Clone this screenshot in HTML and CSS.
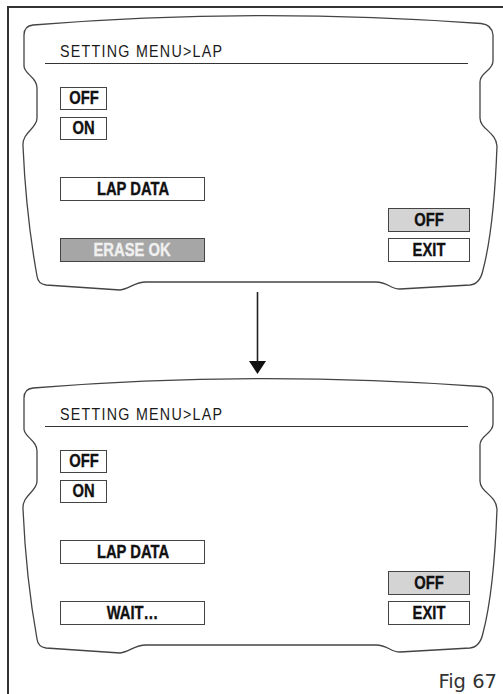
FILE: index.html
```html
<!DOCTYPE html>
<html lang="en">
<head>
    <meta charset="UTF-8">
    <meta name="viewport" content="width=device-width, initial-scale=1.0">
    <title>Setting menu - LAP</title>
    <link rel="stylesheet" href="styles.css">
</head>

<body>
    <div class="frame">

        <!-- Tela 1 -->
        <div class="screen">
            <svg class="outline" width="494" height="279" viewBox="9 13 494 279">
                <path d="M 33 25 Q 254 7 481 23.5 Q 492 24.5 493 35 L 493 61 C 493 71 480 72 480 82 L 480 118 C 480 129 496 132 497 146 Q 494 228 483 270 Q 480 284 470 285 L 400 289 C 390 289 388 282 376 282 L 146 282 C 134 282 130 289 120 290 L 46 285 Q 38 284 37 276 Q 26 215 23 146 C 22 132 37 129 37 118 L 37 88 C 37 77 24 74 24 66 L 24 35 Q 24 26 33 25 Z"/>
            </svg>
            <div class="screen-body">
                <div class="title"><span class="narrow">SETTING MENU&gt;LAP</span></div>
                <div class="toggles">
                    <div class="key small"><span class="narrow">OFF</span></div>
                    <div class="key small"><span class="narrow">ON</span></div>
                </div>
                <div class="key wide lap"><span class="narrow">LAP DATA</span></div>
                <div class="bottom-row">
                    <div class="key wide dark"><span class="narrow">ERASE OK</span></div>
                    <div class="side">
                        <div class="key side-key grey"><span class="narrow">OFF</span></div>
                        <div class="key side-key"><span class="narrow">EXIT</span></div>
                    </div>
                </div>
            </div>
        </div>

        <!-- Seta -->
        <div class="arrow">
            <svg width="494" height="84" viewBox="9 292 494 84">
                <line x1="257.5" y1="291" x2="257.5" y2="363" stroke="#222" stroke-width="1.6"/>
                <polygon points="249,361 266,361 257.5,374" fill="#111"/>
            </svg>
        </div>

        <!-- Tela 2 -->
        <div class="screen">
            <svg class="outline" width="494" height="279" viewBox="9 13 494 279">
                <path d="M 33 25 Q 254 7 481 23.5 Q 492 24.5 493 35 L 493 61 C 493 71 480 72 480 82 L 480 118 C 480 129 496 132 497 146 Q 494 228 483 270 Q 480 284 470 285 L 400 289 C 390 289 388 282 376 282 L 146 282 C 134 282 130 289 120 290 L 46 285 Q 38 284 37 276 Q 26 215 23 146 C 22 132 37 129 37 118 L 37 88 C 37 77 24 74 24 66 L 24 35 Q 24 26 33 25 Z"/>
            </svg>
            <div class="screen-body">
                <div class="title"><span class="narrow">SETTING MENU&gt;LAP</span></div>
                <div class="toggles">
                    <div class="key small"><span class="narrow">OFF</span></div>
                    <div class="key small"><span class="narrow">ON</span></div>
                </div>
                <div class="key wide lap"><span class="narrow">LAP DATA</span></div>
                <div class="bottom-row">
                    <div class="key wide"><span class="narrow">WAIT…</span></div>
                    <div class="side">
                        <div class="key side-key grey"><span class="narrow">OFF</span></div>
                        <div class="key side-key"><span class="narrow">EXIT</span></div>
                    </div>
                </div>
            </div>
        </div>

        <div class="fig">Fig 67</div>
    </div>
</body>
</html>
```

FILE: styles.css
```css
/* Página */
body {
    margin: 0;
    background-color: #ffffff;
    color: #111;
    overflow: hidden;
}

/* Moldura externa (só topo e esquerda) */
.frame {
    margin: 6px 0 0 7px;
    height: 688px;
    box-sizing: border-box;
    border-left: 2px solid #333;
    border-top: 2px solid #333;
    padding-top: 5px;
}

/* Tela do menu */
.screen {
    display: grid;
    width: 494px;
    height: 279px;
}

.outline,
.screen-body {
    grid-area: 1 / 1;
}

.outline path {
    fill: none;
    stroke: #444;
    stroke-width: 1.3;
}

.screen-body {
    padding: 30px 33px 0 51px;
    display: flex;
    flex-direction: column;
    align-items: flex-start;
}

/* Fonte estreita (tipo Helvetica Condensed) */
.narrow {
    display: inline-block;
    transform: scaleX(0.82);
}

/* Título com linha */
.title {
    font-family: "Liberation Sans", sans-serif;
    font-size: 17px;
    line-height: 18px;
    letter-spacing: 1.5px;
    color: #1a1a1a;
    margin-left: -15px;
    width: 408px;
    padding: 0 0 2px 15px;
    border-bottom: 1px solid #333;
    white-space: nowrap;
}

.title .narrow {
    transform: scaleX(0.84);
    transform-origin: left center;
}

/* Teclas */
.key {
    font-family: "Liberation Sans", sans-serif;
    font-weight: bold;
    font-size: 18px;
    line-height: 22px;
    text-align: center;
    white-space: nowrap;
    -webkit-text-stroke: 0.35px currentColor;
    border: 1px solid #444;
    box-sizing: border-box;
    height: 24px;
    background-color: #fff;
    color: #111;
}

.small {
    width: 47px;
    height: 23px;
    line-height: 21px;
}

.wide {
    width: 145px;
}

.side-key {
    width: 82px;
}

.dark {
    background-color: #a6a6a6;
    color: #f0f0f0;
}

.grey {
    background-color: #d4d4d4;
}

.toggles {
    margin-top: 23px;
    display: flex;
    flex-direction: column;
    gap: 7px;
}

.lap {
    margin-top: 37px;
}

.bottom-row {
    margin-top: 7px;
    align-self: stretch;
    display: flex;
    justify-content: space-between;
    align-items: flex-end;
}

.side {
    display: flex;
    flex-direction: column;
    gap: 6px;
}

/* Seta entre as telas */
.arrow {
    height: 84px;
}

.arrow svg {
    display: block;
}

/* Legenda */
.fig {
    margin-top: 15px;
    padding-right: 6px;
    text-align: right;
    font-family: "DejaVu Sans", sans-serif;
    font-size: 19.5px;
    line-height: 23px;
    color: #333;
}
```
